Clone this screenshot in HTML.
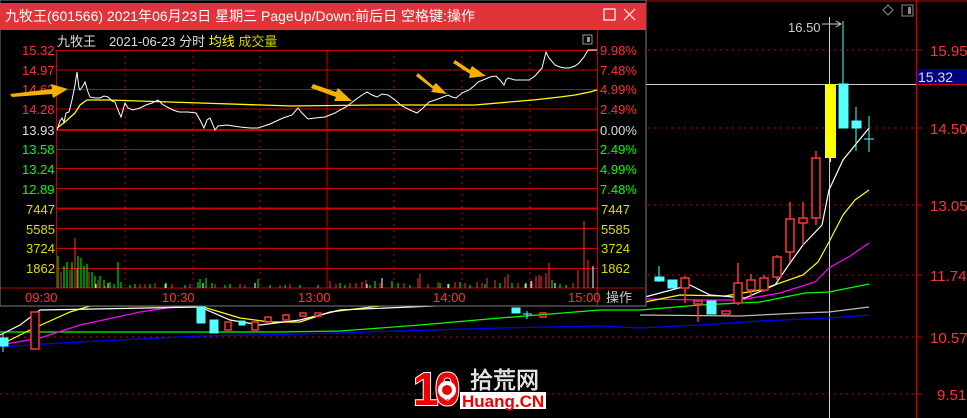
<!DOCTYPE html>
<html><head><meta charset="utf-8"><style>
html,body{margin:0;padding:0;background:#000;width:967px;height:418px;overflow:hidden}
svg{display:block}
text{font-family:"Liberation Sans","Noto Sans CJK SC",sans-serif}
</style></head><body>
<svg width="967" height="418" viewBox="0 0 967 418" xmlns="http://www.w3.org/2000/svg">
<rect width="967" height="418" fill="#000"/>
<g stroke="#c00" stroke-width="1" stroke-dasharray="2,4">
<line x1="0" y1="50" x2="916" y2="50"/><line x1="0" y1="128" x2="916" y2="128"/>
<line x1="0" y1="205" x2="916" y2="205"/><line x1="0" y1="275" x2="916" y2="275"/>
<line x1="0" y1="337" x2="916" y2="337"/><line x1="0" y1="394" x2="916" y2="394"/>
</g>
<line x1="916.5" y1="0" x2="916.5" y2="418" stroke="#c00" stroke-width="1.5"/>
<line x1="0" y1="1" x2="967" y2="1" stroke="#c00"/>
<g stroke="#c00"><line x1="916" y1="50" x2="922" y2="50"/><line x1="916" y1="128" x2="922" y2="128"/><line x1="916" y1="205" x2="922" y2="205"/><line x1="916" y1="275" x2="922" y2="275"/><line x1="916" y1="337" x2="922" y2="337"/><line x1="916" y1="394" x2="922" y2="394"/></g>
<g fill="#f33" font-size="15">
<text x="930" y="56">15.95</text><text x="930" y="134">14.50</text><text x="930" y="211">13.05</text><text x="930" y="281">11.74</text><text x="930" y="343">10.57</text><text x="937" y="400">9.51</text>
</g>
<rect x="917" y="69" width="50" height="15" fill="#000080"/>
<line x1="917" y1="84.5" x2="967" y2="84.5" stroke="#c00"/>
<text x="918" y="82" fill="#ddd" font-size="14">15.32</text>
<line x1="640" y1="84.5" x2="916" y2="84.5" stroke="#ccc"/>
<line x1="829.5" y1="17" x2="829.5" y2="418" stroke="#ccc"/>
<text x="788" y="32" fill="#ccc" font-size="13">16.50</text>
<path d="M822 24 H840 M836 21 L841 24 L836 27" stroke="#ccc" fill="none"/>
<path d="M888 5 L893 10 L888 15 L883 10 Z" stroke="#888" fill="none"/>
<rect x="902" y="5" width="11" height="11" stroke="#888" fill="none"/><rect x="908" y="7" width="3" height="7" fill="#888"/>
<g fill="none" stroke-width="1.2">
<polyline stroke="#00f" points="0,347 60,343 120,340 200,336 300,334 400,331 500,328 600,326 640,328 700,325 760,321 829,318 869,315"/>
<polyline stroke="#bbb" points="640,315 740,316 800,313 829,312 869,307"/>
<polyline stroke="#0f0" points="0,332 120,332 280,332 340,331 420,325 500,318 600,310 640,310 700,305 760,302 805,293 829,292 869,284"/>
<polyline stroke="#f0f" points="0,345 40,338 80,325 140,312 180,306 645,299 700,300 740,300 780,293 815,282 829,268 850,256 869,243"/>
<polyline stroke="#ff0" points="0,345 30,330 70,312 90,306 200,306 240,318 270,322 300,322 330,312 380,306 645,302 680,295 725,296 760,290 803,275 818,262 829,242 843,215 855,200 869,190"/>
<polyline stroke="#fff" points="0,335 20,325 40,310 200,307 230,320 260,325 300,320 340,310 645,297 690,285 710,295 745,298 775,285 790,263 803,245 822,225 829,190 843,160 869,128"/>
</g>
<g stroke="#f33" fill="none" stroke-width="1.5">
<line x1="816" y1="151" x2="816" y2="225"/><rect x="812" y="158" width="8" height="60" fill="#000"/>
<line x1="803" y1="202" x2="803" y2="245"/><rect x="799" y="218" width="8" height="5" fill="#000"/>
<line x1="790" y1="202" x2="790" y2="262"/><rect x="786" y="219" width="8" height="33" fill="#000"/>
<line x1="777" y1="255" x2="777" y2="280"/><rect x="773" y="257" width="8" height="20" fill="#000"/>
<line x1="764" y1="275" x2="764" y2="292"/><rect x="760" y="278" width="8" height="12" fill="#000"/>
<line x1="751" y1="274" x2="751" y2="297"/><rect x="747" y="280" width="8" height="10" fill="#000"/>
<line x1="738" y1="263" x2="738" y2="305"/><rect x="734" y="283" width="8" height="20" fill="#000"/>
<rect x="722" y="311" width="8" height="3"/>
<line x1="698" y1="301" x2="698" y2="322"/><rect x="694" y="301" width="8" height="3" fill="#000"/>
<line x1="685" y1="276" x2="685" y2="303"/><rect x="681" y="278" width="8" height="10" fill="#000"/>
<rect x="31" y="312" width="8" height="37" fill="#000"/>
<rect x="225" y="322" width="6" height="8" fill="#000"/><rect x="252" y="322" width="6" height="8" fill="#000"/>
<rect x="265" y="317" width="6" height="5"/><rect x="283" y="315" width="6" height="5"/><rect x="300" y="313" width="6" height="3"/><rect x="315" y="313" width="6" height="3"/><rect x="540" y="313" width="6" height="4"/>
</g>
<g fill="#5ff" stroke="#5ff">
<line x1="843" y1="21" x2="843" y2="84"/><rect x="839" y="84" width="9" height="44"/>
<line x1="856" y1="107" x2="856" y2="151"/><rect x="852" y="121" width="9" height="7"/>
<line x1="869" y1="116" x2="869" y2="152"/><line x1="864" y1="139" x2="874" y2="139"/>
<rect x="707" y="301" width="9" height="13"/><rect x="668" y="280" width="9" height="8"/><rect x="655" y="277" width="9" height="4"/>
<line x1="659" y1="266" x2="659" y2="282"/>
<rect x="0" y="338" width="8" height="8"/><line x1="3" y1="333" x2="3" y2="352"/>
<rect x="197" y="307" width="8" height="16"/><rect x="210" y="320" width="8" height="13"/><rect x="239" y="321" width="6" height="4"/>
<rect x="512" y="308" width="8" height="5"/><line x1="527" y1="311" x2="527" y2="319"/><line x1="523" y1="314" x2="532" y2="314"/>
</g>
<rect x="825" y="84" width="11" height="74" fill="#ff0"/>
<line x1="830.5" y1="158" x2="830.5" y2="162" stroke="#ff0"/>
<rect x="0" y="0" width="646" height="306" fill="#000" stroke="#778" stroke-width="1"/>
<rect x="0" y="3" width="646" height="27" fill="#e0343a"/>
<text x="5" y="21" fill="#fff" font-size="14">九牧王(601566) 2021年06月23日 星期三 PageUp/Down:前后日 空格键:操作</text>
<rect x="604" y="9" width="11" height="11" fill="none" stroke="#fff" stroke-width="1.2"/>
<path d="M624 9 L635 20 M635 9 L624 20" stroke="#fff" stroke-width="1.2"/>
<text x="57" y="46" fill="#ddd" font-size="13">九牧王　2021-06-23 分时 <tspan fill="#ff0">均线</tspan> <tspan fill="#cc0">成交量</tspan></text>
<rect x="583" y="35" width="9" height="9" fill="none" stroke="#999"/><rect x="587" y="37" width="3" height="5" fill="#999"/>
<g stroke="#c00" stroke-width="1">
<line x1="57" y1="50.5" x2="597" y2="50.5"/><line x1="57" y1="70" x2="597" y2="70"/><line x1="57" y1="89.5" x2="597" y2="89.5"/><line x1="57" y1="109" x2="597" y2="109"/>
<line x1="57" y1="149.5" x2="597" y2="149.5"/><line x1="57" y1="168.5" x2="597" y2="168.5"/><line x1="57" y1="188.5" x2="597" y2="188.5"/>
<line x1="57" y1="228.5" x2="597" y2="228.5"/><line x1="57" y1="248.5" x2="597" y2="248.5"/><line x1="57" y1="268.5" x2="597" y2="268.5"/>
<line x1="0" y1="288" x2="646" y2="288"/>
<line x1="56.5" y1="50" x2="56.5" y2="288"/><line x1="597.5" y1="30" x2="597.5" y2="306"/><line x1="327" y1="50" x2="327" y2="288"/>
</g>
<line x1="57" y1="130" x2="597" y2="130" stroke="#c00" stroke-width="2"/>
<line x1="57" y1="208.5" x2="597" y2="208.5" stroke="#c00" stroke-width="2"/>
<g stroke="#c00" stroke-dasharray="2,4"><line x1="125" y1="50" x2="125" y2="288"/><line x1="193" y1="50" x2="193" y2="288"/><line x1="260" y1="50" x2="260" y2="288"/><line x1="394" y1="50" x2="394" y2="288"/><line x1="462" y1="50" x2="462" y2="288"/><line x1="530" y1="50" x2="530" y2="288"/></g>
<g font-size="13">
<g fill="#f33"><text x="22" y="55">15.32</text><text x="22" y="75">14.97</text><text x="22" y="94">14.62</text><text x="22" y="114">14.28</text>
<text x="600" y="55">9.98%</text><text x="600" y="75">7.48%</text><text x="600" y="94">4.99%</text><text x="600" y="114">2.49%</text></g>
<text x="22" y="135" fill="#ddd">13.93</text><text x="600" y="135" fill="#ddd">0.00%</text>
<g fill="#0f0"><text x="22" y="154">13.58</text><text x="22" y="174">13.24</text><text x="22" y="194">12.89</text>
<text x="600" y="154">2.49%</text><text x="600" y="174">4.99%</text><text x="600" y="194">7.48%</text></g>
<g fill="#dd0"><text x="26" y="214">7447</text><text x="26" y="234">5585</text><text x="26" y="253">3724</text><text x="26" y="273">1862</text>
<text x="601" y="214">7447</text><text x="601" y="234">5585</text><text x="601" y="253">3724</text><text x="601" y="273">1862</text></g>
<g fill="#f33"><text x="25" y="302">09:30</text><text x="162" y="302">10:30</text><text x="298" y="302">13:00</text><text x="433" y="302">14:00</text><text x="568" y="302">15:00</text></g>
<text x="606" y="302" fill="#ccc">操作</text>
</g>
<g stroke-width="1">
<path stroke="#0f0" d="M58 288V256M64 288V266M67 288V262M72 288V262M78 288V256M81 288V258M84 288V266M87 288V264M92 288V272M95 288V276M100 288V276M104 288V280M110 288V282M114 288V284M118 288V262M121 288V282M130 288V285M135 288V284M150 288V284M165 288V284M185 288V285M198 288V282M200 288V279M206 288V278M212 288V283M225 288V285M230 288V284M258 288V279M270 288V285M285 288V285M300 288V285M318 288V285M340 288V283M345 288V285M370 288V285M375 288V281M392 288V281M398 288V283M410 288V285M440 288V283M449 288V284M460 288V282M470 288V285M485 288V284M500 288V283M512 288V283M525 288V284M552 288V280M560 288V284M566 288V285"/>
<path stroke="#f33" d="M61 288V272M70 288V270M75 288V238M77 288V268M89 288V272M98 288V280M105 288V286M140 288V284M145 288V284M155 288V283M172 288V284M190 288V284M215 288V284M240 288V284M245 288V285M280 288V285M290 288V284M330 288V281M336 288V284M350 288V283M356 288V283M362 288V282M366 288V280M380 288V283M404 288V283M418 288V278M420 288V274M428 288V284M438 288V282M455 288V282M465 288V283M477 288V282M482 288V283M487 288V278M495 288V280M505 288V277M508 288V274M518 288V283M532 288V281M536 288V276M539 288V275M541 288V276M546 288V273M549 288V263M573 288V283M578 288V270M584 288V221M588 288V260"/>
<path stroke="#fff" d="M96 288V284M108 288V283M166 288V283M203 288V283M255 288V283M367 288V284M382 288V278M448 288V284M526 288V283M531 288V281M555 288V283M593 288V266"/>
</g>
<polyline fill="none" stroke="#ff0" stroke-width="1.3" points="57,128 65,122 75,113 80,105 87,100 108,100 200,103 292,106 375,105 475,105 533,100 560,97 575,95 590,92 597,90"/>
<polyline fill="none" stroke="#fff" stroke-width="1" points="57,130 60,121 62,118 64,122 66,113 69,112 72,100 75,85 77,72 79,88 80,90 83,86 85,82 88,92 90,97 95,98 100,98 104,96 108,97 112,101 115,102 118,110 121,117 123,110 125,103 128,108 133,110 140,108 146,105 152,103 158,100 162,104 167,107 173,110 179,112 188,112 196,113 200,120 204,128 207,120 210,118 213,125 215,130 218,126 227,125 240,127 250,128 258,128 270,124 283,118 292,115 298,108 302,113 308,119 315,118 325,117 335,113 340,110 346,107 355,100 362,95 367,92 372,95 377,97 382,94 388,95 395,100 402,106 410,110 417,113 423,108 429,102 438,99 448,95 452,97 456,98 462,93 469,90 474,86 478,82 483,80 490,77 496,76 500,80 504,85 506,80 508,78 515,80 522,80 529,80 535,76 542,68 544,60 546,52 549,58 555,65 560,67 565,68 569,68 575,66 579,63 584,57 588,50 597,50"/>
<g fill="#f5b000">
<polygon points="10,94 52,89 51,84 68,89 53,98 52,94 12,97"/>
<polygon points="313,84 336,92 338,88 352,101 334,101 336,97 311,88"/>
<polygon points="418,73 433,86 436,83 447,94 431,92 433,89 416,76"/>
<polygon points="455,60 470,70 472,66 486,76 469,78 470,74 453,63"/>
</g>
<text x="413" y="405" font-size="46" font-weight="bold" fill="#e00" stroke="#fff" stroke-width="2" paint-order="stroke" letter-spacing="-4">10</text>
<circle cx="447" cy="390" r="9" fill="#fff"/><circle cx="447" cy="390" r="5" fill="#e00"/>
<text x="470" y="388" font-size="23" fill="#ddd" stroke="#fff" stroke-width="0.5">拾荒网</text>
<rect x="460" y="392" width="86" height="17" fill="#fff"/>
<text x="462" y="407" font-size="17" font-weight="bold" fill="#e00">Huang.CN</text>
</svg>
</body></html>
